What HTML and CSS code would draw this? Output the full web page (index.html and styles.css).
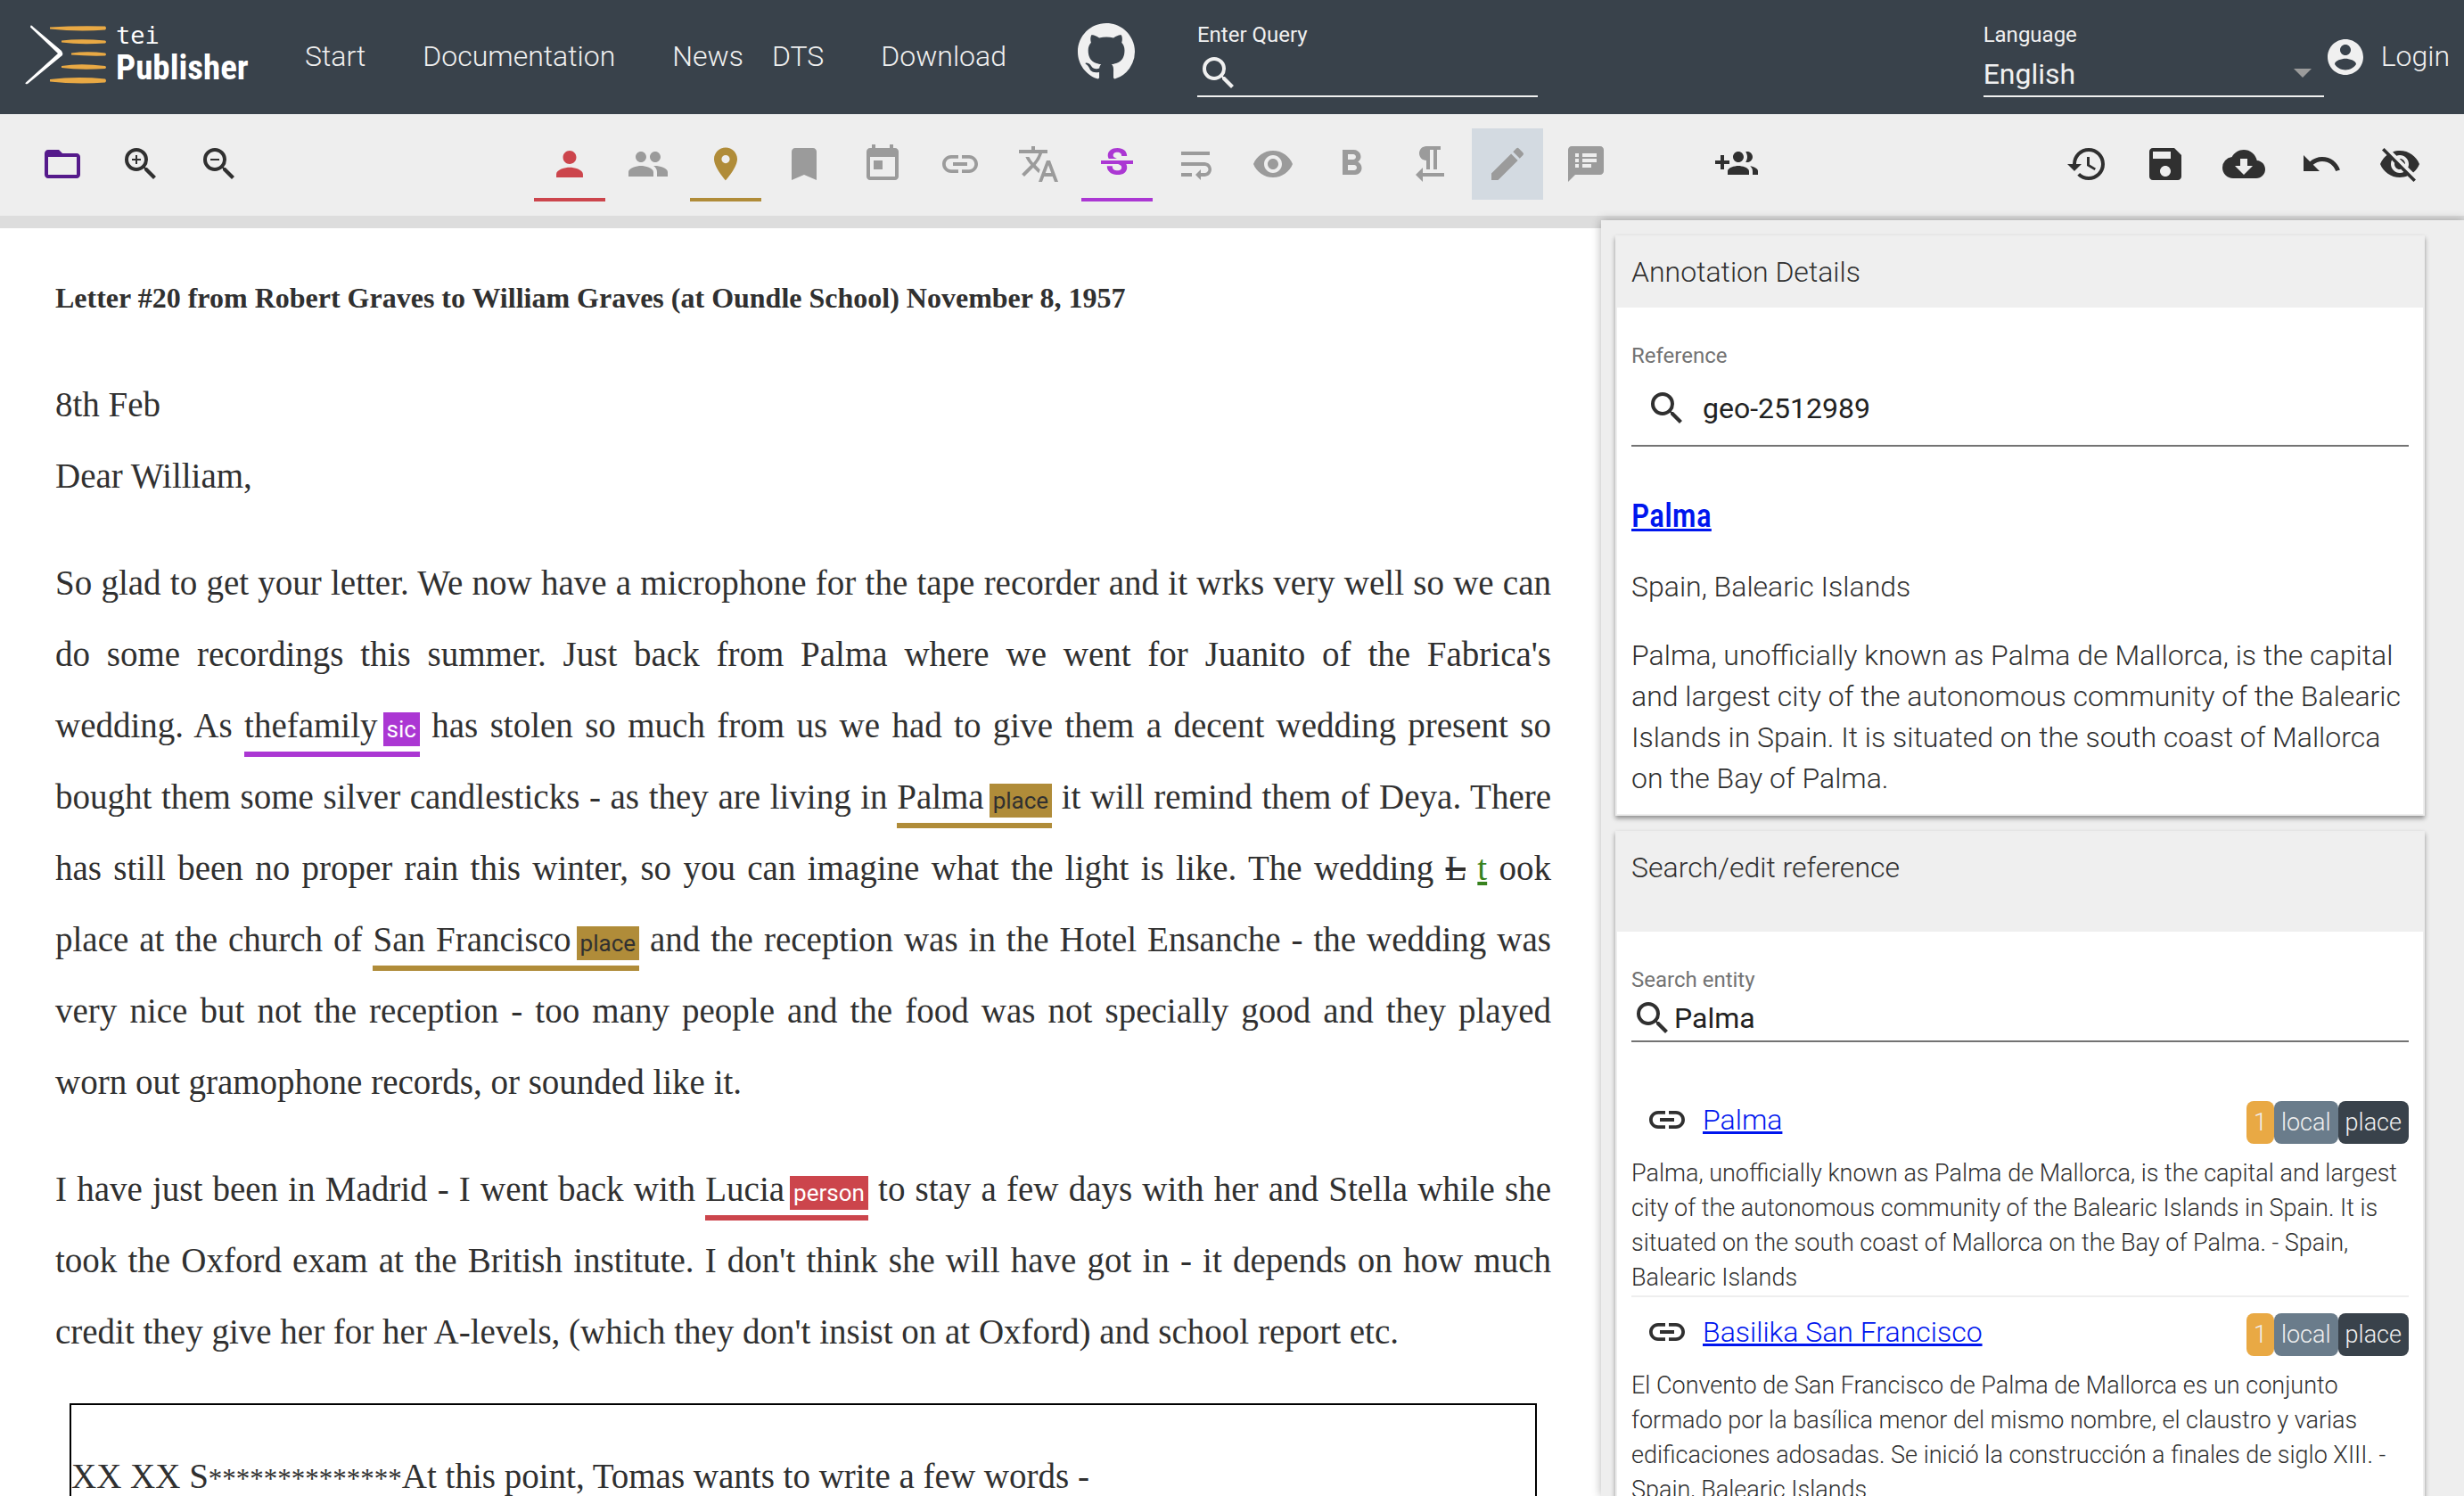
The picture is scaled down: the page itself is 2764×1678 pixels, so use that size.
FILE: index.html
```html
<!DOCTYPE html>
<html lang="en">
<head>
<meta charset="utf-8">
<title>TEI Publisher</title>
<link rel="stylesheet" href="styles.css">
</head>
<body>
<header class="topbar">
  <a class="logo" href="#" aria-label="tei Publisher">
    <svg class="logo-mark" viewBox="0 0 92 68" aria-hidden="true">
      <path fill="#fff" d="M6.500 .5Q8 0 9 2L41 29q2 3 1 5L3 66q-3 1-2.500-1L37 32 6 2.500Z"/>
      <g fill="#e9a944">
        <path d="M28 2.500Q60 .5 90 1.500q2 2 0 4Q60 8 28 4.500Z"/>
        <path d="M41 17.500Q62 15 90 17.500q2 1.500 0 3Q62 22.500 41 19.500Z"/>
        <path d="M52 31.500Q70 29 90 31.500q2 1.500 0 3Q70 35 52 33.500Z"/>
        <path d="M41 46Q62 42.500 90 46q2 1.500 0 3Q62 51 41 48Z"/>
        <path d="M28 61Q58 57.500 90 60.500q2 2 0 4Q58 67 28 63.500Z"/>
      </g>
    </svg>
    <span class="logo-text"><span class="logo-tei">tei</span><span class="logo-pub">Publisher</span></span>
  </a>
  <nav class="nav">
    <a href="#">Start</a>
    <a href="#">Documentation</a>
    <a href="#" class="nav-tight">News</a>
    <a href="#">DTS</a>
    <a href="#">Download</a>
  </nav>
  <a class="github" href="#" aria-label="GitHub"><svg viewBox="0 0 16 16"><path d="M8 0C3.580 0 0 3.580 0 8c0 3.540 2.290 6.530 5.470 7.590.4.070.55-.17.55-.38 0-.19-.01-.82-.01-1.490-2.010.37-2.530-.49-2.690-.94-.09-.23-.48-.94-.82-1.130-.28-.15-.68-.52-.01-.53.63-.01 1.080.58 1.230.82.72 1.210 1.870.87 2.330.66.07-.52.28-.87.51-1.070-1.780-.2-3.640-.89-3.640-3.950 0-.87.31-1.590.82-2.150-.08-.2-.36-1.020.08-2.120 0 0 .67-.21 2.200.82.64-.18 1.320-.27 2-.27s1.360.09 2 .27c1.530-1.040 2.200-.82 2.200-.82.44 1.100.16 1.920.08 2.120.51.56.82 1.270.82 2.150 0 3.070-1.870 3.750-3.650 3.950.29.25.54.73.54 1.480 0 1.070-.01 1.930-.01 2.200 0 .21.15.46.55.38A8.010 8.010 0 0 0 16 8c0-4.420-3.580-8-8-8Z"/></svg></a>
  <div class="field top-field">
    <label for="query">Enter Query</label>
    <div class="field-row">
      <svg class="icon" viewBox="0 0 24 24"><path d="M15.500 14h-.79l-.28-.27A6.470 6.470 0 0 0 16 9.500 6.500 6.500 0 1 0 9.500 16c1.610 0 3.090-.59 4.230-1.570l.27.28v.79l5 4.990L20.490 19l-4.990-5zm-6 0C7.010 14 5 11.990 5 9.500S7.010 5 9.500 5 14 7.010 14 9.500 11.990 14 9.500 14z"/></svg>
      <input id="query" type="text">
    </div>
  </div>
  <div class="field top-field language">
    <label for="lang">Language</label>
    <div class="field-row">
      <select id="lang"><option>English</option></select>
      <svg class="caret" viewBox="0 0 20 10"><path d="M0 0h20L10 10z"/></svg>
    </div>
  </div>
  <a class="login" href="#">
    <svg class="icon" viewBox="0 0 24 24"><path d="M12 2C6.480 2 2 6.480 2 12s4.480 10 10 10 10-4.480 10-10S17.520 2 12 2zm0 3c1.660 0 3 1.340 3 3s-1.340 3-3 3-3-1.340-3-3 1.340-3 3-3zm0 14.200c-2.500 0-4.710-1.280-6-3.220.03-1.990 4-3.080 6-3.080 1.990 0 5.970 1.090 6 3.080-1.290 1.940-3.500 3.220-6 3.220z"/></svg>
    <span>Login</span>
  </a>
</header>

<div class="toolbar" role="toolbar" aria-label="Annotation tools">
  <div class="tools tools-left">
    <button class="tool visited" aria-label="Open"><svg class="icon" viewBox="0 0 24 24"><path d="M20 6h-8l-2-2H4c-1.100 0-1.990.9-1.990 2L2 18c0 1.100.9 2 2 2h16c1.100 0 2-.9 2-2V8c0-1.100-.9-2-2-2zm0 12H4V8h16v10z"/></svg></button>
    <button class="tool" aria-label="Zoom in"><svg class="icon" viewBox="0 0 24 24"><path d="M15.500 14h-.79l-.28-.27A6.470 6.470 0 0 0 16 9.500 6.500 6.500 0 1 0 9.500 16c1.610 0 3.090-.59 4.230-1.570l.27.28v.79l5 4.990L20.490 19l-4.990-5zm-6 0C7.010 14 5 11.990 5 9.500S7.010 5 9.500 5 14 7.010 14 9.500 11.990 14 9.500 14zM12 10h-2v2H9v-2H7V9h2V7h1v2h2v1z"/></svg></button>
    <button class="tool" aria-label="Zoom out"><svg class="icon" viewBox="0 0 24 24"><path d="M15.500 14h-.79l-.28-.27A6.470 6.470 0 0 0 16 9.500 6.500 6.500 0 1 0 9.500 16c1.610 0 3.090-.59 4.230-1.570l.27.28v.79l5 4.990L20.490 19l-4.990-5zm-6 0C7.010 14 5 11.990 5 9.500S7.010 5 9.500 5 14 7.010 14 9.500 11.990 14 9.500 14zM7 9h5v1H7z"/></svg></button>
  </div>
  <div class="tools tools-marks">
    <button class="tool person on" aria-label="Person"><svg class="icon" viewBox="0 0 24 24"><path d="M12 12c2.060 0 3.730-1.670 3.730-3.730S14.060 4.530 12 4.530 8.270 6.200 8.270 8.270 9.940 12 12 12zm0 1.870c-2.490 0-7.470 1.250-7.470 3.730v1.870h14.940V17.600c0-2.480-4.980-3.730-7.470-3.730z"/></svg></button>
    <button class="tool off" aria-label="Group"><svg class="icon" viewBox="0 0 24 24"><path d="M16 11c1.660 0 2.990-1.340 2.990-3S17.660 5 16 5c-1.660 0-3 1.340-3 3s1.340 3 3 3zm-8 0c1.660 0 2.990-1.340 2.990-3S9.660 5 8 5C6.340 5 5 6.340 5 8s1.340 3 3 3zm0 2c-2.330 0-7 1.170-7 3.500V19h14v-2.500c0-2.330-4.670-3.500-7-3.500zm8 0c-.29 0-.62.02-.97.05 1.160.84 1.970 1.970 1.970 3.450V19h6v-2.500c0-2.330-4.670-3.500-7-3.500z"/></svg></button>
    <button class="tool place on" aria-label="Place"><svg class="icon" viewBox="0 0 24 24"><path d="M12 2.800c-3.600 0-6.500 2.900-6.500 6.500C5.500 14.100 12 21.200 12 21.200s6.500-7.100 6.500-11.900c0-3.600-2.900-6.500-6.500-6.500zm0 8.800a2.300 2.300 0 1 1 0-4.600 2.300 2.300 0 0 1 0 4.600z"/></svg></button>
    <button class="tool off" aria-label="Term"><svg class="icon" viewBox="0 0 24 24"><path d="M17 3H7c-1.100 0-1.990.9-1.990 2L5 21l7-3 7 3V5c0-1.100-.9-2-2-2z"/></svg></button>
    <button class="tool off" aria-label="Date"><svg class="icon" viewBox="0 0 24 24"><path d="M19 3h-1V1h-2v2H8V1H6v2H5c-1.110 0-1.990.9-1.990 2L3 19c0 1.100.89 2 2 2h14c1.100 0 2-.9 2-2V5c0-1.100-.9-2-2-2zm0 16H5V8h14v11zM7 10h5v5H7z"/></svg></button>
    <button class="tool off" aria-label="Link"><svg class="icon" viewBox="0 0 24 24"><path d="M3.900 12c0-1.710 1.390-3.100 3.100-3.100h4V7H7c-2.760 0-5 2.240-5 5s2.240 5 5 5h4v-1.900H7c-1.710 0-3.100-1.390-3.100-3.100zM8 13h8v-2H8v2zm9-6h-4v1.900h4c1.710 0 3.100 1.390 3.100 3.100s-1.390 3.100-3.100 3.100h-4V17h4c2.760 0 5-2.240 5-5s-2.240-5-5-5z"/></svg></button>
    <button class="tool off" aria-label="Language"><svg class="icon" viewBox="0 0 24 24"><path d="M12.870 15.070l-2.540-2.510.03-.03A17.520 17.520 0 0 0 14.070 6H17V4h-7V2H8v2H1v1.990h11.170C11.500 7.920 10.440 9.750 9 11.350 8.070 10.320 7.300 9.190 6.690 8h-2c.73 1.630 1.730 3.170 2.980 4.560l-5.090 5.020L4 19l5-5 3.110 3.110.76-2.040zM18.500 10h-2L12 22h2l1.120-3h4.750L21 22h2l-4.500-12zm-2.620 7l1.620-4.330L19.120 17h-3.240z"/></svg></button>
    <button class="tool sic on" aria-label="Sic"><svg class="icon" viewBox="0 0 24 24"><path d="M7.240 8.750c-.26-.48-.39-1.030-.39-1.670 0-.61.13-1.160.4-1.670.26-.5.63-.93 1.110-1.290.48-.35 1.050-.63 1.700-.83.66-.19 1.390-.29 2.180-.29.81 0 1.540.11 2.210.34.66.22 1.230.54 1.690.94.47.4.83.88 1.080 1.430s.38 1.150.38 1.810h-3.010c0-.31-.05-.59-.15-.85-.09-.27-.24-.49-.44-.68-.2-.19-.45-.33-.75-.44-.3-.1-.66-.16-1.060-.16-.39 0-.74.04-1.030.13s-.53.21-.72.36c-.19.16-.34.34-.44.55-.1.21-.15.43-.15.66 0 .48.25.88.74 1.210.38.25.77.48 1.410.7H7.390c-.05-.08-.11-.17-.15-.25zM21 12v-2H3v2h9.620c.18.07.4.14.55.2.37.17.66.34.87.51s.35.36.43.57c.07.2.11.43.11.69 0 .23-.05.45-.14.66-.09.2-.23.38-.42.53-.19.15-.42.26-.71.35-.29.08-.63.13-1.010.13-.43 0-.83-.04-1.180-.13s-.66-.23-.91-.42c-.25-.19-.45-.44-.59-.75s-.25-.76-.25-1.210H6.400c0 .55.08 1.130.24 1.580s.37.85.65 1.210c.28.35.6.66.98.92.37.26.78.48 1.220.65.44.17.9.3 1.380.39.48.08.96.13 1.440.13.8 0 1.530-.09 2.180-.28s1.210-.45 1.670-.79c.46-.34.82-.77 1.070-1.270s.38-1.070.38-1.710c0-.6-.1-1.140-.31-1.610-.05-.11-.11-.23-.17-.33H21z"/></svg></button>
    <button class="tool off" aria-label="Regularise"><svg class="icon" viewBox="0 0 24 24"><path d="M4 19h6v-2H4v2zM20 5H4v2h16V5zm-3 6H4v2h13.250c1.100 0 2 .9 2 2s-.9 2-2 2H15v-2l-3 3 3 3v-2h2c2.210 0 4-1.790 4-4s-1.790-4-4-4z"/></svg></button>
    <button class="tool off" aria-label="Unclear"><svg class="icon" viewBox="0 0 24 24"><path d="M12 4.500C7 4.500 2.730 7.610 1 12c1.730 4.390 6 7.500 11 7.500s9.270-3.110 11-7.500c-1.730-4.390-6-7.500-11-7.500zM12 17c-2.760 0-5-2.240-5-5s2.240-5 5-5 5 2.240 5 5-2.240 5-5 5zm0-8c-1.660 0-3 1.340-3 3s1.340 3 3 3 3-1.340 3-3-1.340-3-3-3z"/></svg></button>
    <button class="tool off" aria-label="Bold"><svg class="icon" viewBox="0 0 24 24"><path d="M15.600 10.790c.97-.67 1.650-1.770 1.650-2.790 0-2.260-1.750-4-4-4H7v14h7.040c2.090 0 3.710-1.700 3.710-3.790 0-1.520-.86-2.820-2.150-3.420zM10 6.500h3c.83 0 1.500.67 1.500 1.500s-.67 1.500-1.500 1.500h-3v-3zm3.500 9H10v-3h3.500c.83 0 1.500.67 1.500 1.500s-.67 1.500-1.500 1.500z"/></svg></button>
    <button class="tool off" aria-label="Paragraph"><svg class="icon" viewBox="0 0 24 24"><path d="M10 10v5h2V4h2v11h2V4h2V2h-8C7.790 2 6 3.790 6 6s1.790 4 4 4zM8 17v-3l-4 4 4 4v-3h12v-2H8z"/></svg></button>
    <button class="tool off active" aria-label="Edit"><svg class="icon" viewBox="0 0 24 24"><path d="M3 17.250V21h3.750L17.810 9.940l-3.750-3.750L3 17.250zM20.710 7.040a.996.996 0 0 0 0-1.410l-2.340-2.340a.996.996 0 0 0-1.410 0l-1.830 1.830 3.750 3.750 1.830-1.830z"/></svg></button>
    <button class="tool off" aria-label="Note"><svg class="icon" viewBox="0 0 24 24"><path d="M20 2H4c-1.100 0-1.990.9-1.990 2L2 22l4-4h14c1.100 0 2-.9 2-2V4c0-1.100-.9-2-2-2zM8 14H6v-2h2v2zm0-3H6V9h2v2zm0-3H6V6h2v2zm7 6h-5v-2h5v2zm3-3h-8V9h8v2zm0-3h-8V6h8v2z"/></svg></button>
  </div>
  <button class="tool add-group" aria-label="Add group"><svg class="icon" viewBox="0 0 24 24"><path d="M8 10H5V7H3v3H0v2h3v3h2v-3h3v-2zm10 1c1.660 0 2.990-1.340 2.990-3S19.660 5 18 5c-.32 0-.63.05-.91.14.57.81.9 1.790.9 2.860s-.34 2.040-.9 2.860c.28.09.59.14.91.14zm-5 0c1.660 0 2.990-1.340 2.990-3S14.660 5 13 5c-1.660 0-3 1.340-3 3s1.340 3 3 3zm6.620 2.160c.83.73 1.380 1.660 1.380 2.840v2h3v-2c0-1.540-2.370-2.490-4.380-2.840zM13 13c-2 0-6 1-6 3v2h12v-2c0-2-4-3-6-3z"/></svg></button>
  <div class="tools tools-right">
    <button class="tool" aria-label="History"><svg class="icon" viewBox="0 0 24 24"><path d="M13 3a9 9 0 0 0-9 9H1l3.890 3.890.07.14L9 12H6c0-3.870 3.130-7 7-7s7 3.130 7 7-3.130 7-7 7c-1.930 0-3.680-.79-4.940-2.060l-1.420 1.420A8.954 8.954 0 0 0 13 21a9 9 0 0 0 0-18zm-1 5v5l4.280 2.540.72-1.210-3.500-2.080V8H12z"/></svg></button>
    <button class="tool" aria-label="Save"><svg class="icon" viewBox="0 0 24 24"><path d="M17 3H5c-1.110 0-2 .9-2 2v14c0 1.100.89 2 2 2h14c1.100 0 2-.9 2-2V7l-4-4zm-5 16c-1.660 0-3-1.340-3-3s1.340-3 3-3 3 1.340 3 3-1.340 3-3 3zm3-10H5V5h10v4z"/></svg></button>
    <button class="tool" aria-label="Download"><svg class="icon" viewBox="0 0 24 24"><path d="M19.350 10.040A7.490 7.490 0 0 0 12 4C9.110 4 6.600 5.640 5.350 8.040A5.994 5.994 0 0 0 0 14c0 3.310 2.690 6 6 6h13c2.760 0 5-2.240 5-5 0-2.640-2.050-4.780-4.650-4.960zM17 13l-5 5-5-5h3V9h4v4h3z"/></svg></button>
    <button class="tool" aria-label="Undo"><svg class="icon" viewBox="0 0 24 24"><path d="M12.500 8c-2.650 0-5.050.99-6.900 2.600L2 7v9h9l-3.620-3.620c1.390-1.160 3.160-1.880 5.120-1.880 3.540 0 6.550 2.310 7.600 5.500l2.370-.78C21.080 11.030 17.150 8 12.500 8z"/></svg></button>
    <button class="tool" aria-label="Hide annotations"><svg class="icon" viewBox="0 0 24 24"><path d="M12 7c2.760 0 5 2.240 5 5 0 .65-.13 1.260-.36 1.830l2.920 2.920c1.510-1.260 2.700-2.890 3.430-4.750-1.730-4.390-6-7.500-11-7.500-1.400 0-2.740.25-3.980.7l2.160 2.160C10.740 7.130 11.350 7 12 7zM2 4.270l2.280 2.280.46.46A11.804 11.804 0 0 0 1 12c1.730 4.390 6 7.500 11 7.500 1.550 0 3.030-.3 4.380-.84l.42.42L19.730 22 21 20.730 3.270 3 2 4.270zM7.530 9.800l1.550 1.550c-.05.21-.08.43-.08.65 0 1.660 1.340 3 3 3 .22 0 .44-.03.65-.08l1.550 1.550c-.67.33-1.410.53-2.200.53-2.760 0-5-2.240-5-5 0-.79.2-1.530.53-2.200zm4.310-.78l3.150 3.150.02-.16c0-1.660-1.340-3-3-3l-.17.01z"/></svg></button>
  </div>
</div>

<main class="workspace">
  <article class="letter">
    <h1>Letter #20 from Robert Graves to William Graves (at Oundle School) November 8, 1957</h1>
    <div class="opener">8th Feb</div>
    <div class="opener">Dear William,</div>
    <p>So glad to get your letter. We now have a microphone for the tape recorder and it wrks very well so we can do some recordings this summer. Just back from Palma where we went for Juanito of the Fabrica's wedding. As <span class="anno sic">thefamily<span class="badge">sic</span></span> has stolen so much from us we had to give them a decent wedding present so bought them some silver candlesticks - as they are living in <span class="anno place">Palma<span class="badge">place</span></span> it will remind them of Deya. There has still been no proper rain this winter, so you can imagine what the light is like. The wedding <del>L</del> <ins>t</ins> ook place at the church of <span class="anno place">San Francisco<span class="badge">place</span></span> and the reception was in the Hotel Ensanche - the wedding was very nice but not the reception - too many people and the food was not specially good and they played worn out gramophone records, or sounded like it.</p>
    <p>I have just been in Madrid - I went back with <span class="anno person">Lucia<span class="badge">person</span></span> to stay a few days with her and Stella while she took the Oxford exam at the British institute. I don't think she will have got in - it depends on how much credit they give her for her A-levels, (which they don't insist on at Oxford) and school report etc.</p>
    <div class="insert">XX XX S<span class="redacted">**************</span>At this point, Tomas wants to write a few words -</div>
  </article>

  <aside class="panel">
    <section class="card">
      <h2>Annotation Details</h2>
      <div class="card-body">
        <div class="field">
          <label for="ref">Reference</label>
          <div class="field-row roomy">
            <svg class="icon" viewBox="0 0 24 24"><path d="M15.500 14h-.79l-.28-.27A6.470 6.470 0 0 0 16 9.500 6.500 6.500 0 1 0 9.500 16c1.610 0 3.090-.59 4.230-1.570l.27.28v.79l5 4.990L20.490 19l-4.990-5zm-6 0C7.010 14 5 11.990 5 9.500S7.010 5 9.500 5 14 7.010 14 9.500 11.990 14 9.500 14z"/></svg>
            <input id="ref" type="text" value="geo-2512989">
          </div>
        </div>
        <h3><a href="#">Palma</a></h3>
        <p class="region">Spain, Balearic Islands</p>
        <p class="about">Palma, unofficially known as Palma de Mallorca, is the capital and largest city of the autonomous community of the Balearic Islands in Spain. It is situated on the south coast of Mallorca on the Bay of Palma.</p>
      </div>
    </section>
    <section class="card">
      <h2 class="tall">Search/edit reference</h2>
      <div class="card-body">
        <div class="field">
          <label for="entity">Search entity</label>
          <div class="field-row">
            <svg class="icon" viewBox="0 0 24 24"><path d="M15.500 14h-.79l-.28-.27A6.470 6.470 0 0 0 16 9.500 6.500 6.500 0 1 0 9.500 16c1.610 0 3.090-.59 4.230-1.570l.27.28v.79l5 4.990L20.490 19l-4.990-5zm-6 0C7.010 14 5 11.990 5 9.500S7.010 5 9.500 5 14 7.010 14 9.500 11.990 14 9.500 14z"/></svg>
            <input id="entity" type="text" value="Palma">
          </div>
        </div>
        <ul class="results">
          <li>
            <div class="hit">
              <svg class="icon" viewBox="0 0 24 24"><path d="M3.900 12c0-1.710 1.390-3.100 3.100-3.100h4V7H7c-2.760 0-5 2.240-5 5s2.240 5 5 5h4v-1.900H7c-1.710 0-3.100-1.390-3.100-3.100zM8 13h8v-2H8v2zm9-6h-4v1.900h4c1.710 0 3.100 1.390 3.100 3.100s-1.390 3.100-3.100 3.100h-4V17h4c2.760 0 5-2.240 5-5s-2.240-5-5-5z"/></svg>
              <a href="#">Palma</a>
              <span class="tag count">1</span><span class="tag source">local</span><span class="tag kind">place</span>
            </div>
            <p>Palma, unofficially known as Palma de Mallorca, is the capital and largest city of the autonomous community of the Balearic Islands in Spain. It is situated on the south coast of Mallorca on the Bay of Palma. - Spain, Balearic Islands</p>
          </li>
          <li>
            <div class="hit">
              <svg class="icon" viewBox="0 0 24 24"><path d="M3.900 12c0-1.710 1.390-3.100 3.100-3.100h4V7H7c-2.760 0-5 2.240-5 5s2.240 5 5 5h4v-1.900H7c-1.710 0-3.100-1.390-3.100-3.100zM8 13h8v-2H8v2zm9-6h-4v1.900h4c1.710 0 3.100 1.390 3.100 3.100s-1.390 3.100-3.100 3.100h-4V17h4c2.760 0 5-2.240 5-5s-2.240-5-5-5z"/></svg>
              <a href="#">Basilika San Francisco</a>
              <span class="tag count">1</span><span class="tag source">local</span><span class="tag kind">place</span>
            </div>
            <p>El Convento de San Francisco de Palma de Mallorca es un conjunto formado por la basílica menor del mismo nombre, el claustro y varias edificaciones adosadas. Se inició la construcción a finales de siglo XIII. - Spain, Balearic Islands</p>
          </li>
        </ul>
      </div>
    </section>
  </aside>
</main>
</body>
</html>
```
FILE: styles.css
```css
* { box-sizing: border-box; }

body {
  margin: 0;
  height: 100vh;
  display: flex;
  flex-direction: column;
  overflow: hidden;
  background: #fff;
  color: #303030;
  font: 300 32px/46px Roboto, sans-serif;
}

h1, h2, h3, p, ul { margin: 0; padding: 0; font-weight: inherit; }
button, input, select { font: inherit; color: inherit; border: 0; margin: 0; padding: 0; background: none; border-radius: 0; }
.icon { display: block; width: 48px; height: 48px; fill: currentColor; flex: none; }

/* Top bar */
.topbar {
  flex: none;
  display: flex;
  align-items: center;
  height: 128px;
  padding: 0 16px 0 28px;
  background: #39424b;
  color: #f0f0f0;
}
.topbar a { color: inherit; text-decoration: none; }
.logo { display: flex; gap: 10px; width: 314px; }
.logo-mark { width: 92px; height: 68px; }
.logo-text { display: flex; flex-direction: column; color: #fff; }
.logo-tei { font: 27px/24px "DejaVu Sans Mono", monospace; }
.logo-pub { font: bold 39px/48px "Liberation Sans Narrow", "Roboto Condensed", Roboto, sans-serif; }
.nav { display: flex; gap: 64px; padding-bottom: 3px; }
.nav-tight { margin-right: -32px; }
.github { margin: 0 70px 12px 80px; }
.github svg { display: block; width: 64px; height: 64px; fill: currentColor; }

.field label { display: block; font-weight: 400; font-size: 24px; line-height: 40px; color: #737373; }
.field-row { display: flex; align-items: center; height: 50px; padding-bottom: 3px; border-bottom: 2px solid #737373; }
.field-row input { flex: 1; min-width: 0; height: 44px; font-weight: 400; color: #212121; outline: 0; }
.top-field { width: 382px; }
.top-field label { color: inherit; }
.top-field .field-row { border-color: #f0f0f0; }
.top-field .field-row input { color: inherit; }
.language { margin-left: auto; }
.language select { flex: 1; appearance: none; font-weight: 400; height: 44px; }
.caret { width: 20px; height: 10px; margin-right: 14px; fill: #9b9b9b; }
.login { display: flex; align-items: center; gap: 16px; }
.login span { padding-bottom: 3px; }

/* Toolbar */
.toolbar {
  flex: none;
  display: flex;
  align-items: flex-start;
  height: 128px;
  padding: 16px 32px 0 30px;
  background: #eee;
  border-bottom: 14px solid #ddd;
}
.tools { display: flex; justify-content: space-between; }
.tools-left { width: 256px; }
.tools-marks { width: 1220px; margin-left: 313px; }
.tools-right { width: 431px; margin-left: auto; }
.add-group { margin-left: 89px; }
.tool { position: relative; display: flex; align-items: center; justify-content: center; width: 80px; height: 80px; color: #303030; }
.tool.off { color: #9b9b9b; }
.tool.visited { color: #551a8b; }
.tool.active { background: #d3dae1; }
.tool.person { color: #cc454c; }
.tool.place { color: #b08c39; }
.tool.sic { color: #ab37d3; }
.tool.on::after { content: ""; position: absolute; inset: auto 0 -2px; height: 4px; background: currentColor; }

/* Letter */
.workspace { flex: 1; min-height: 0; display: flex; }
.letter { flex: 1; min-width: 0; padding: 38px 56px 0 62px; font: 400 39px/80px "Liberation Serif", serif; }
.letter h1 { font-weight: bold; font-size: 32px; margin-bottom: 40px; }
.letter p { text-align: justify; margin-top: 40px; }
.anno { border-bottom: 6px solid; padding-bottom: 8px; }
.anno.sic { border-color: #ab37d3; --tint: #ab37d3; }
.anno.place { border-color: #b08c39; --tint: #b08c39; }
.anno.person { border-color: #cc454c; --tint: #cc454c; }
.badge { display: inline-block; margin-left: 6px; padding: 0 4px; font: 400 26px/38px Roboto, sans-serif; background: var(--tint); color: #fff; }
.place .badge { color: #303030; }
del { text-decoration-thickness: 4px; }
ins { color: #38821e; text-decoration-thickness: 4px; }
.insert { margin: 40px 16px 0; padding-top: 40px; height: 400px; border: 2px solid #000; white-space: nowrap; }
.redacted { font-size: 31px; }

/* Side panel */
.panel { flex: 0 0 968px; margin-top: -9px; padding: 17px 44px 0 16px; background: #eee; box-shadow: 0 0 10px rgba(0, 0, 0, .3); position: relative; display: flex; flex-direction: column; gap: 17px; }
.card { flex: none; background: #fff; border: 2px solid #eee; box-shadow: 0 3px 5px rgba(0, 0, 0, .4); }
.card h2 { padding: 16px; height: 79px; background: #efefef; font-size: 32px; }
.card h2.tall { height: 111px; }
.card-body { padding: 34px 16px 17px; }
.field-row.roomy { height: 82px; padding-left: 16px; }
.roomy input { margin-left: 16px; }
.card h3 { margin-top: 52px; font: 500 36px/52px "Liberation Sans Narrow", "Roboto Condensed", Roboto, sans-serif; }
.card a { color: #0016ee; }
.region { margin-top: 30px; }
.about { margin-top: 31px; }
.results { margin-top: 66px; list-style: none; }
.results li { border-bottom: 2px solid #eee; margin-bottom: 18px; }
.hit { display: flex; align-items: center; height: 48px; padding-left: 16px; }
.hit a { margin: 0 auto 6px 16px; }
.hit .icon { margin-bottom: 6px; }
.results p { margin-top: 14px; font-size: 27px; line-height: 39px; }
.tag { padding: 0 8px; border-radius: 8px; font-size: 27px; line-height: 48px; color: #f0f0f0; }
.count { background: #e9a944; }
.source { background: #6a7c8b; }
.kind { background: #39424b; }
```
